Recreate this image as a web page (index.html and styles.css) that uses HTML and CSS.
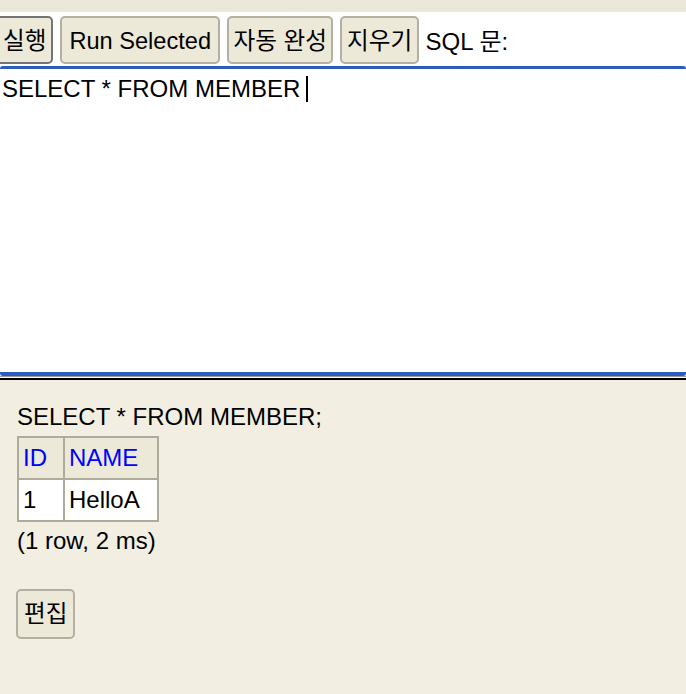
FILE: index.html
```html
<!DOCTYPE html>
<html>
<head>
<meta charset="utf-8">
<link rel="stylesheet" href="styles.css">
</head>
<body>
<div class="topstrip"></div>
<div class="toolbar">
  <button class="btn btn-first">실행</button>
  <button class="btn btn-en">Run Selected</button>
  <button class="btn">자동 완성</button>
  <button class="btn">지우기</button>
  <span class="label">SQL 문:</span>
</div>
<div class="editor"><span class="sql">SELECT * FROM MEMBER</span><span class="caret"></span></div>
<div class="sep"></div>
<div class="result">
  <div class="query">SELECT * FROM MEMBER;</div>
  <table class="grid">
    <tr><th class="c-id">ID</th><th class="c-name">NAME</th></tr>
    <tr><td>1</td><td>HelloA</td></tr>
  </table>
  <div class="count">(1 row, 2 ms)</div>
  <button class="btn btn-edit">편집</button>
</div>
</body>
</html>
```
FILE: styles.css
```css
html, body {
  margin: 0;
  padding: 0;
}
body {
  width: 686px;
  height: 694px;
  overflow: hidden;
  background: #f2efe2;
  font-family: "Liberation Sans", Arial, "Noto Sans CJK KR", sans-serif;
  font-size: 24px;
  color: #000;
}
.topstrip {
  height: 12px;
  background: #ebe8da;
}
.toolbar {
  background: #fff;
  height: 54px;
  display: flex;
  align-items: flex-start;
  padding-top: 4px;
  box-sizing: border-box;
  gap: 7px;
  margin-left: -7px;
}
.btn {
  font-family: "Liberation Sans", Arial, "Noto Sans CJK KR", sans-serif;
  font-size: 23.6px;
  height: 48px;
  background: #ece9d8;
  border: 2px solid #b3b0a2;
  border-radius: 5px;
  padding: 3px 4.5px 0;
  margin: 0;
  color: #000;
  line-height: 1;
}
.btn-en {
  padding: 3px 7px 0;
}
.btn-first {
  border-color: #747474;
  padding: 3px 5px 0 8px;
}
.label {
  line-height: 48px;
  margin-top: 2px;
  margin-left: 0;
}
.editor {
  height: 310px;
  background: #fff;
  border-top: 3px solid #2b5cc4;
  border-bottom: 4px solid #2b5cc4;
  border-radius: 3px;
  box-sizing: border-box;
  padding: 6px 3px 0;
  line-height: 27px;
  display: flex;
  align-items: flex-start;
}
.sql {
  margin-left: -1px;
}
.caret {
  display: inline-block;
  width: 2px;
  height: 26px;
  background: #000;
  margin-left: 6px;
  margin-top: 1px;
}
.sep {
  height: 4px;
  border-top: 1px solid #9a9a9a;
  border-bottom: 2px solid #000;
  background: #fff;
  box-sizing: border-box;
}
.result {
  padding: 22px 17px 0;
}
.query {
  line-height: 29px;
}
.grid {
  border-collapse: collapse;
  margin-top: 5px;
}
.grid th, .grid td {
  border: 2px solid #aeab9c;
  height: 40px;
  padding: 0 5px 0 4px;
  text-align: left;
  font-weight: normal;
}
.grid th {
  background: #ece9d8;
  color: #0000ff;
}
.grid td {
  background: #fff;
}
.c-id {
  width: 35px;
}
.c-name {
  width: 83px;
}
.count {
  margin-top: 5px;
  line-height: 28px;
}
.btn-edit {
  margin-top: 34px;
  margin-left: -1px;
  height: 50px;
  padding: 2px 6px 0;
}
```
